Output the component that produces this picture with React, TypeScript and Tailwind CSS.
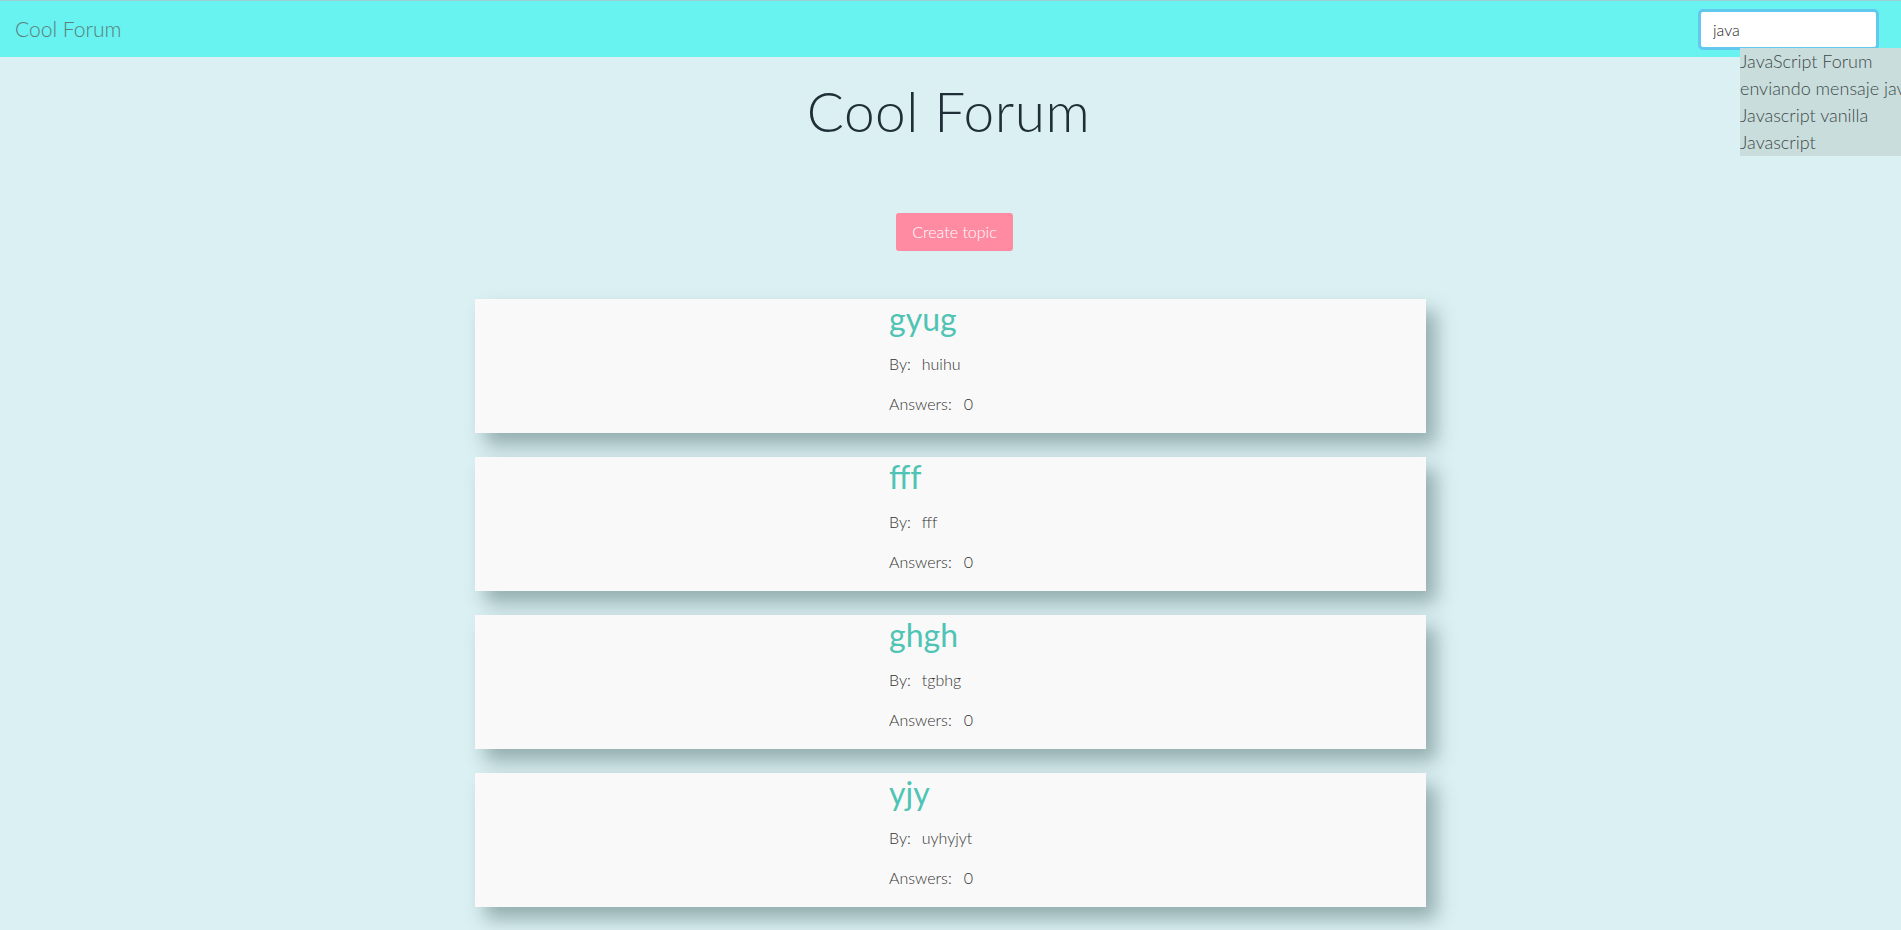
import React from "react";

const topics = [
  { title: "gyug", author: "huihu", answers: 0 },
  { title: "fff", author: "fff", answers: 0 },
  { title: "ghgh", author: "tgbhg", answers: 0 },
  { title: "yjy", author: "uyhyjyt", answers: 0 },
];

const suggestions = [
  "JavaScript Forum",
  "enviando mensaje javascript",
  "Javascript vanilla",
  "Javascript",
];

export default function App() {
  return (
    <div className="min-h-[930px] bg-[#dbf0f2] font-['Lato',sans-serif] overflow-hidden">
      {/* Navbar */}
      <nav className="relative h-[57px] bg-[#68f2f0] border-t border-[#9ccfd3] flex items-center justify-between pl-[15px] pr-[22px]">
        <a className="text-[21px] font-light text-[#5b7f7d]">Cool Forum</a>
        <div className="relative">
          <input
            defaultValue="java"
            className="w-[181px] h-[41px] rounded-[5px] bg-white border-[3px] border-[#63c8ee] pl-[12px] text-[16px] font-light text-[#222] outline-none"
          />
          <ul className="absolute left-[42px] top-[39px] w-[200px] bg-[#c8dddc] text-[18px] font-light text-[#3f4a4a] z-10 whitespace-nowrap overflow-hidden">
            {suggestions.map((s) => (
              <li key={s} className="h-[27px] leading-[27px]">
                {s}
              </li>
            ))}
          </ul>
        </div>
      </nav>

      {/* Header */}
      <h1 className="mt-[14px] pr-[4px] text-center text-[55px] font-light tracking-[0.5px] text-[#1f2f37] leading-[80px]">
        Cool Forum
      </h1>

      <div className="flex justify-center mt-[62px] pl-[8px]">
        <button className="w-[117px] h-[38px] rounded-[3px] bg-[#ff8ba3] text-white text-[16px] font-light">
          Create topic
        </button>
      </div>

      {/* Topics */}
      <div className="mt-[48px] flex flex-col gap-[24px] items-center">
        {topics.map((t) => (
          <div
            key={t.title}
            className="w-[951px] h-[134px] bg-[#f9f9f9] shadow-[10px_12px_18px_rgba(60,90,90,0.45)] pl-[414px]"
          >
            <h2 className="text-[32px] font-normal text-[#4fc4b4] leading-[40px]">{t.title}</h2>
            <p className="mt-[15px] text-[16px] font-light text-[#333] leading-[20px]">
              By:<span className="ml-[11px]">{t.author}</span>
            </p>
            <p className="mt-[20px] text-[16px] font-light text-[#333] leading-[20px]">
              Answers:<span className="ml-[12px]">{t.answers}</span>
            </p>
          </div>
        ))}
      </div>
    </div>
  );
}
